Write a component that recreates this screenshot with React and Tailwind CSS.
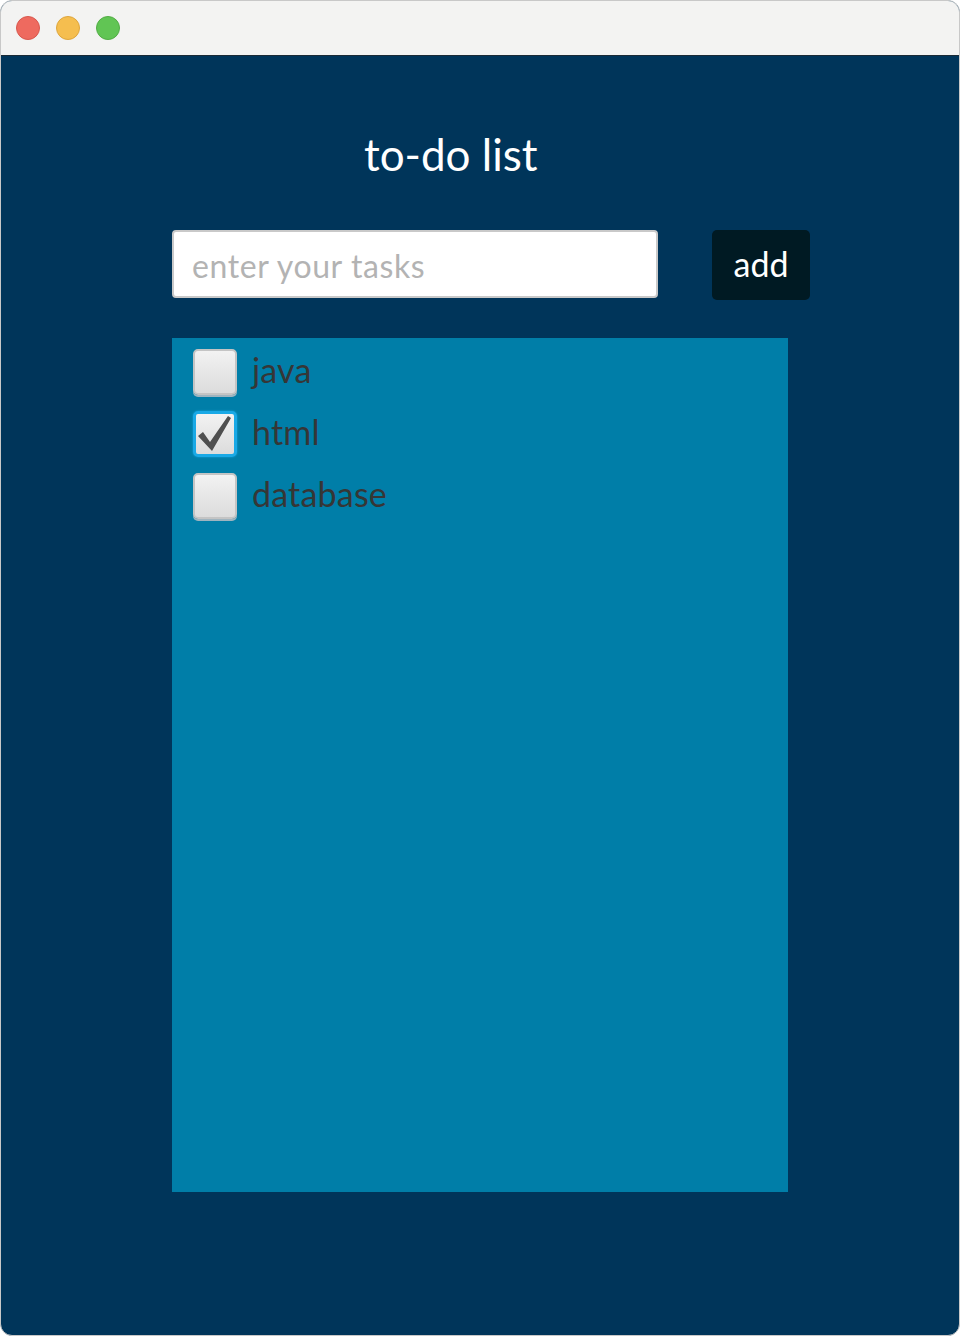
import React, { useState } from 'react';

const font = { fontFamily: 'Lato, "Open Sans", sans-serif' };

function Task({ label, done, onToggle }) {
    return (
        <label className="flex items-center gap-[15px] h-[62px] cursor-pointer">
            <span
                onClick={onToggle}
                className={`w-[44px] h-[46px] rounded-[5px] flex items-center justify-center bg-gradient-to-b from-[#f2f2f2] to-[#dcdcdc] ${done ? 'border-[3px] border-[#19a9e6] shadow-[0_0_2px_#19a9e6]' : 'border-2 border-[#c4c4c4] shadow-[0_2px_0_#9fb4bf]'}`}
            >
                {done && (
                    <svg width="36" height="38" viewBox="0 0 36 38" className="overflow-visible">
                        <path d="M1 21 L6 17 L13 27 L31 1 L34 3 L15 36 Z" fill="#4f4f4f" />
                    </svg>
                )}
            </span>
            <span className="text-[34px] text-[#363636] leading-none pb-1 tracking-[0.2px]">{label}</span>
        </label>
    );
}

export default function App() {
    const [tasks, setTasks] = useState([
        { label: 'java', done: false },
        { label: 'html', done: true },
        { label: 'database', done: false },
    ]);
    const [text, setText] = useState('');

    const toggle = (i) => setTasks(tasks.map((t, j) => (j === i ? { ...t, done: !t.done } : t)));

    return (
        <div className="w-[960px] h-[1336px] bg-white" style={font}>
            <div className="w-full h-full rounded-[12px] overflow-hidden border border-[#c8c8c8] flex flex-col bg-[#00355a]">
                {/* title bar */}
                <div className="h-[55px] bg-[#f3f3f2] border-b border-[#1a2a36] flex items-center gap-[16px] pl-[15px] shrink-0">
                    <span className="w-[24px] h-[24px] rounded-full bg-[#ee6a5f] border border-[#d8584e]" />
                    <span className="w-[24px] h-[24px] rounded-full bg-[#f5be4f] border border-[#dea63d]" />
                    <span className="w-[24px] h-[24px] rounded-full bg-[#61c554] border border-[#52ad45]" />
                </div>

                <div className="flex flex-col pl-[171px]">
                    <h1 className="text-[44px] text-white font-normal leading-none mt-[76px] ml-[192px] h-[98px]">to-do list</h1>

                    <div className="flex items-start">
                        <input
                            value={text}
                            onChange={(e) => setText(e.target.value)}
                            placeholder="enter your tasks"
                            className="w-[486px] h-[68px] bg-white rounded-[4px] border-2 border-[#c9c9c9] px-[18px] pt-[2px] text-[32px] tracking-[0.6px] text-[#333] placeholder:text-[#b3b3b3] outline-none"
                            style={font}
                        />
                        <button
                            className="ml-[54px] w-[98px] h-[70px] bg-[#001a23] rounded-[5px] text-white text-[34px] pb-1"
                            style={font}
                            onClick={() => {
                                if (text.trim()) {
                                    setTasks([...tasks, { label: text.trim(), done: false }]);
                                    setText('');
                                }
                            }}
                        >
                            add
                        </button>
                    </div>

                    <div className="w-[616px] h-[854px] bg-[#007ea8] mt-[38px] pl-[21px] pt-[3px] flex flex-col">
                        {tasks.map((t, i) => (
                            <Task key={i} label={t.label} done={t.done} onToggle={() => toggle(i)} />
                        ))}
                    </div>
                </div>
            </div>
        </div>
    );
}
